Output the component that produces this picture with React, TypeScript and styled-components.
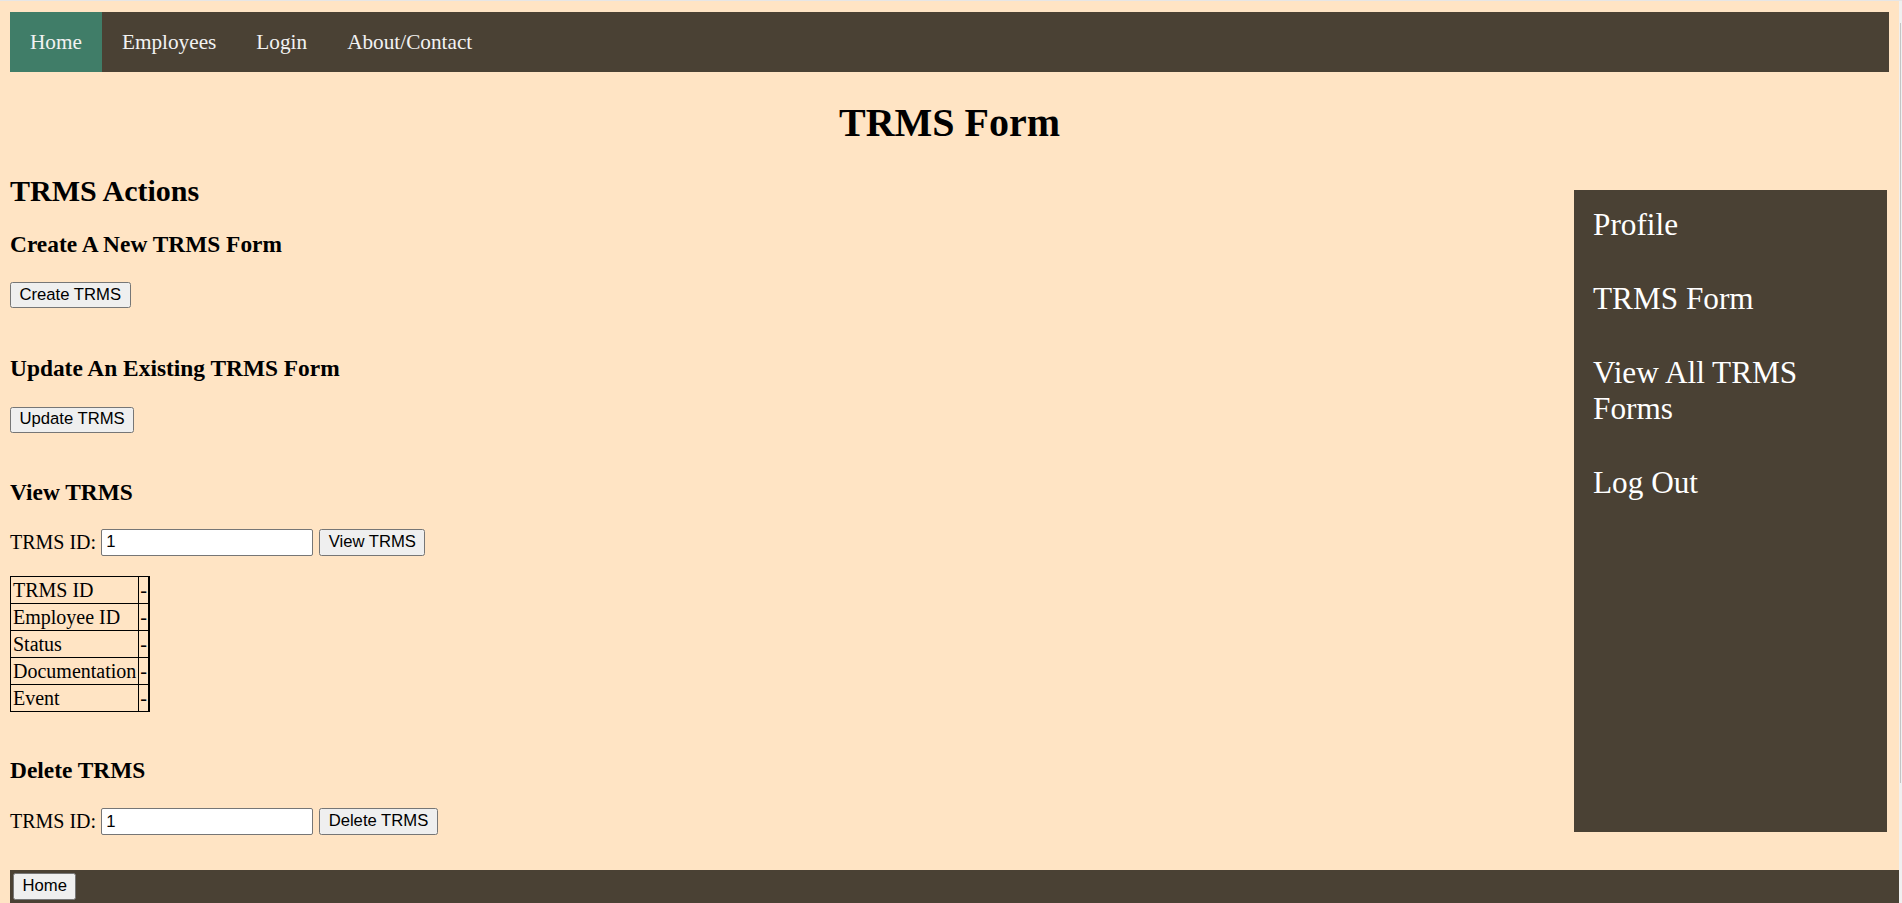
import React from "react";
import styled, { createGlobalStyle } from "styled-components";

const GlobalStyle = createGlobalStyle`
  html, body { margin: 0; padding: 0; background: #ececec; overflow: hidden; }
  * { box-sizing: border-box; }
`;

const Screen = styled.div`
  display: flex;
  width: 1902px;
  height: 903px;
  padding-top: 1px;
  background: #e6e6e6;
`;

const Page = styled.div`
  width: 1899px;
  height: 902px;
  background: #ffe4c4;
  padding: 11px 10px 0 10px;
  overflow: hidden;
  font-family: "Liberation Serif", "Times New Roman", serif;
  font-size: 20px;
  color: #000;
`;

const ScrollTrack = styled.div`
  width: 3px;
  height: 902px;
  background: #f0f0f0;
  padding: 22px 0 0 1px;
`;

const ScrollThumb = styled.div`
  width: 1px;
  height: 760px;
  background: #c4c4c4;
`;

const TopNav = styled.nav`
  display: flex;
  background: #4a4134;
  height: 60px;
`;

const NavLink = styled.a<{ $active?: boolean }>`
  display: block;
  padding: 17.5px 20px;
  font-size: 21.25px;
  line-height: 25px;
  color: #f2f2f2;
  text-decoration: none;
  background: ${(p) => (p.$active ? "#407d68" : "transparent")};
`;

const Title = styled.h1`
  margin: 28px 0 0;
  text-align: center;
  font-size: 40px;
  line-height: 46px;
  font-weight: bold;
`;

const MainRow = styled.div`
  display: flex;
  align-items: flex-start;
  margin-top: 28px;
`;

const Actions = styled.div`
  flex: 1;
`;

const ActionsHeading = styled.h2`
  margin: 0 0 22.5px;
  font-size: 30px;
  line-height: 34.5px;
  font-weight: bold;
`;

const Section = styled.section<{ $gap: number }>`
  margin-top: ${(p) => p.$gap}px;
`;

const SectionTitle = styled.h3<{ $after?: number }>`
  margin: 0 0 ${(p) => p.$after ?? 24}px;
  font-size: 23.4px;
  line-height: 27px;
  font-weight: bold;
`;

const Button = styled.button<{ $h?: number }>`
  font-family: "Liberation Sans", Arial, sans-serif;
  font-size: 16.67px;
  color: #000;
  background: #efefef;
  border: 1px solid #767676;
  border-radius: 2.5px;
  padding: 0 8.5px;
  height: ${(p) => p.$h ?? 27}px;
  line-height: 1;
  cursor: pointer;
`;

const InputRow = styled.div`
  display: flex;
  align-items: center;
  gap: 5px;
  height: 27px;
`;

const Label = styled.label`
  font-size: 20px;
  line-height: 23px;
`;

const IdInput = styled.input`
  width: 212px;
  height: 27px;
  border: 1px solid #767676;
  border-radius: 2px;
  padding: 0 4px;
  background: #fff;
  font-family: "Liberation Sans", Arial, sans-serif;
  font-size: 16.67px;
  color: #000;
`;

const RowButton = styled(Button)`
  margin-left: 1px;
`;

const InfoTable = styled.table`
  margin-top: 20.5px;
  border-collapse: collapse;
  border-right: 2px solid #000;
`;

const Cell = styled.td`
  border: 1px solid #000;
  padding: 1px 2px;
  height: 27px;
  font-size: 20px;
  line-height: 23px;
  vertical-align: middle;
`;

const ValueCell = styled(Cell)`
  padding: 1px 1px;
  border-right: 2px solid #000;
`;

const SideMenu = styled.aside`
  width: 313px;
  height: 642px;
  margin: 16px 2px 0 0;
  background: #4a4134;
  padding: 17px 19px;
  display: flex;
  flex-direction: column;
  gap: 38px;
`;

const SideLink = styled.a`
  display: block;
  color: #fff;
  font-size: 31.25px;
  line-height: 36px;
  text-decoration: none;
`;

const Footer = styled.footer`
  margin: 35px -10px 0 0;
  background: #4a4134;
  padding: 3px;
  height: 40px;
`;

const rows = ["TRMS ID", "Employee ID", "Status", "Documentation", "Event"];

export default function App() {
  return (
    <>
      <GlobalStyle />
      <Screen>
        <Page>
          <TopNav>
            <NavLink $active href="#">Home</NavLink>
            <NavLink href="#">Employees</NavLink>
            <NavLink href="#">Login</NavLink>
            <NavLink href="#">About/Contact</NavLink>
          </TopNav>
          <Title>TRMS Form</Title>
          <MainRow>
            <Actions>
              <ActionsHeading>TRMS Actions</ActionsHeading>
              <Section $gap={0}>
                <SectionTitle>Create A New TRMS Form</SectionTitle>
                <Button $h={26}>Create TRMS</Button>
              </Section>
              <Section $gap={47}>
                <SectionTitle>Update An Existing TRMS Form</SectionTitle>
                <Button $h={26}>Update TRMS</Button>
              </Section>
              <Section $gap={46}>
                <SectionTitle $after={23}>View TRMS</SectionTitle>
                <InputRow>
                  <Label>TRMS ID:</Label>
                  <IdInput defaultValue="1" />
                  <RowButton>View TRMS</RowButton>
                </InputRow>
                <InfoTable>
                  <tbody>
                    {rows.map((r) => (
                      <tr key={r}>
                        <Cell>{r}</Cell>
                        <ValueCell>-</ValueCell>
                      </tr>
                    ))}
                  </tbody>
                </InfoTable>
              </Section>
              <Section $gap={45}>
                <SectionTitle>Delete TRMS</SectionTitle>
                <InputRow>
                  <Label>TRMS ID:</Label>
                  <IdInput defaultValue="1" />
                  <RowButton>Delete TRMS</RowButton>
                </InputRow>
              </Section>
            </Actions>
            <SideMenu>
              <SideLink href="#">Profile</SideLink>
              <SideLink href="#">TRMS Form</SideLink>
              <SideLink href="#">View All TRMS Forms</SideLink>
              <SideLink href="#">Log Out</SideLink>
            </SideMenu>
          </MainRow>
          <Footer>
            <Button>Home</Button>
          </Footer>
        </Page>
        <ScrollTrack>
          <ScrollThumb />
        </ScrollTrack>
      </Screen>
    </>
  );
}
